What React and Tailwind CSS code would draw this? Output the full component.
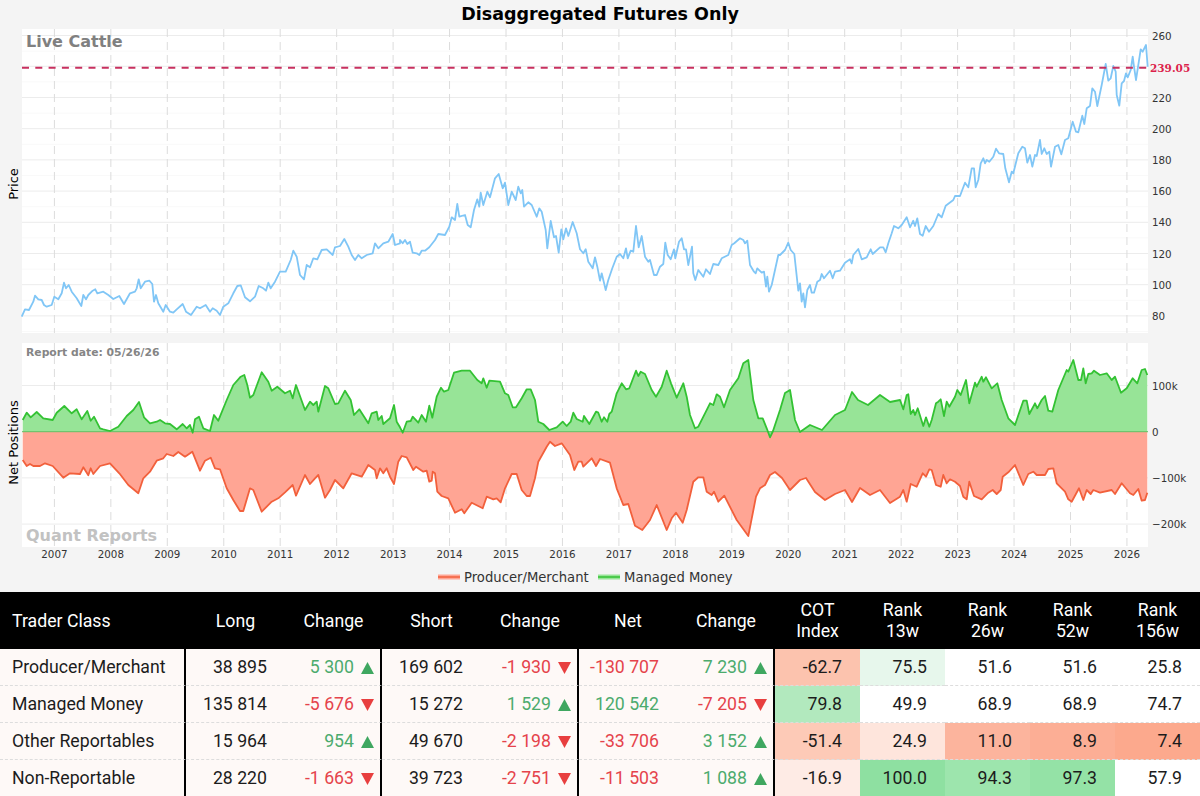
// Points below were read off 3x crops, so each trace carries its crop origin.
const trace = (pts, ox, oy) => pts.map(([x, y]) => [+(ox + x / 3).toFixed(1), +(oy + y / 3).toFixed(1)]);
const toPath = (pts) => pts.map((p) => p.join(',')).join(' ');

const PRICE = [
  ...trace([[5,470],[15,448],[27,450],[40,425],[45,407],[55,418],[65,420],[72,435],[80,440],[95,435],[103,410],[115,418],[125,400],[132,368],[138,385],[146,375],[155,395],[170,415],[184,438],[190,405],[198,418],[205,405],[218,392],[226,388],[232,400],[250,395],[265,405],[280,417],[298,408],[312,432],[330,400],[345,395],[350,385],[356,358],[362,385],[375,365],[388,362],[397,372],[402,425],[408,405],[415,430],[430,455],[437,435],[450,455],[460,458],[470,448],[488,432],[498,455],[513,465],[530,440],[540,445],[557,435],[570,455],[578,445],[590,452],[600,465],[610,440],[625,430],[640,400],[652,378],[662,376],[675,412],[690,424],[705,410],[716,378],[730,385],[738,392],[745,368],[752,385],[765,365],[780,335],[797,335],[812,300],[820,272],[830,290],[840,345],[852,358],[860,315],[870,322],[880,295],[892,298],[905,270],[920,268],[938,285],[945,262],[960,258],[973,237],[985,260],[995,285],[1005,300],[1015,285],[1025,295],[1040,285],[1058,280],[1065,250],[1075,265],[1090,250],[1105,245],[1118,222],[1125,255],[1140,250]], 20, 160),
  ...trace([[0,240],[8,250],[15,240],[22,252],[30,245],[38,278],[50,280],[58,285],[65,272],[75,272],[88,262],[105,240],[115,222],[135,225],[148,200],[155,172],[165,180],[172,132],[178,170],[195,165],[203,195],[212,202],[222,150],[232,118],[238,140],[242,98],[250,135],[262,95],[270,112],[285,55],[296,42],[308,85],[315,68],[325,135],[335,95],[347,120],[355,80],[362,100],[367,90],[372,140],[385,127],[395,135],[410,170],[418,145],[425,155],[437,210],[442,265],[452,183],[462,232],[468,228],[476,278],[484,208],[490,238],[498,205],[505,228],[518,186],[530,220],[540,268],[550,280],[557,268],[565,305],[578,325],[585,292],[592,320],[600,362],[605,340],[617,390],[625,360],[637,325],[650,290],[660,282],[670,295],[678,265],[683,295],[692,272],[700,275],[708,198],[716,262],[725,228],[735,290],[745,305],[750,300],[762,345],[770,345],[780,320],[790,312],[796,248],[803,285],[812,298],[822,268],[826,295],[837,245],[845,235],[852,268],[858,268],[865,315],[876,260],[880,340],[886,360],[895,330],[910,350],[918,328],[930,342],[940,312],[955,315],[965,295],[985,285],[995,255],[1003,250],[1020,235],[1030,240],[1035,250],[1042,242],[1050,315],[1062,335],[1067,340],[1072,325],[1085,338],[1092,335],[1098,380],[1102,350],[1107,395],[1115,375],[1125,330],[1135,285]], 400, 160),
  ...trace([[30,345],[45,330],[55,308],[62,330],[73,342],[85,452],[90,430],[95,485],[100,460],[105,502],[112,450],[120,435],[125,458],[132,458],[142,425],[150,420],[155,402],[162,415],[180,392],[188,415],[195,395],[210,392],[225,368],[240,358],[245,370],[250,345],[265,327],[275,358],[290,352],[302,328],[308,342],[330,322],[340,322],[347,337],[355,310],[365,280],[372,258],[385,265],[395,255],[410,232],[420,262],[430,242],[435,258],[442,235],[450,282],[458,287],[467,258],[477,275],[490,258],[505,222],[515,232],[527,197],[550,180],[555,168],[570,168],[585,128],[595,142],[605,85],[612,85],[617,142],[625,120],[632,70],[640,55],[645,70],[650,60],[658,65],[670,50],[678,26],[687,40],[700,42],[706,85],[717,127],[725,95],[730,100],[745,40],[757,20],[765,25],[772,68],[780,45],[787,80],[795,45],[800,48]], 770, 140),
  ...trace([[420,420],[425,462],[433,445],[440,462],[448,455],[453,500],[465,440],[475,435],[484,463],[495,420],[505,415],[518,365],[528,395],[535,397],[547,347],[553,372],[560,325],[570,318],[577,265],[585,275],[592,318],[605,255],[617,192],[625,242],[632,235],[640,198],[647,215],[650,285],[658,317],[665,250],[672,243],[678,220],[683,232],[692,210],[698,170],[702,200],[708,240],[722,148],[728,155],[738,135],[743,200]], 900, 0),
];

const MANAGED = [
  ...trace([[68,270],[80,248],[92,262],[110,246],[130,265],[158,270],[170,248],[193,228],[215,250],[230,238],[245,268],[262,243],[272,272],[282,260],[300,295],[310,298],[330,303],[355,290],[380,258],[400,240],[417,216],[432,262],[450,280],[470,275],[480,270],[495,280],[510,282],[530,298],[548,282],[560,295],[570,285],[578,308],[585,268],[597,260],[610,295],[630,303],[642,255],[655,272],[680,210],[700,165],[722,140],[733,135],[742,165],[750,203],[760,195],[785,127],[805,155],[815,182],[832,170],[855,190],[870,182],[878,205],[888,165],[915,240],[930,215],[940,225],[950,215],[955,245],[975,168],[985,175],[1005,222],[1015,220],[1035,182],[1052,210],[1062,255],[1078,238],[1105,280],[1115,250],[1130,245],[1135,270],[1145,258],[1150,282]], 0, 330),
  ...trace([[0,205],[12,165],[20,215],[30,232],[38,248],[50,215],[62,213],[68,200],[85,218],[95,195],[108,215],[118,167],[127,203],[140,140],[153,113],[162,125],[175,120],[192,68],[215,62],[240,62],[262,90],[275,100],[280,85],[290,113],[298,92],[330,95],[345,130],[355,135],[368,172],[378,172],[395,145],[410,118],[422,118],[435,150],[445,215],[460,222],[478,240],[500,232],[518,215],[530,228],[542,215],[550,188],[560,207],[578,215],[582,198],[598,222],[618,185],[625,188],[635,215],[642,202],[652,215],[658,192],[665,185],[680,130],[695,100],[708,118],[718,115],[738,62],[745,78],[752,65],[765,72],[785,120],[798,140],[815,110],[830,62],[843,100],[860,143],[880,100],[890,140],[900,195],[915,235],[925,230],[945,190],[960,160],[970,165],[980,133],[990,140],[1002,172],[1020,120],[1045,85],[1060,40],[1075,30],[1090,150],[1105,205],[1118,205],[1130,235],[1140,262]], 390, 350),
  [773,431],[780,410],[785,393],[790,390],[795,420],[800,432],[810,425],[822,430],[835,415],[845,410],[852,392],[858,400],[868,405],[880,395],[890,402],
  ...trace([[0,180],[10,208],[20,165],[25,163],[32,222],[40,210],[45,225],[53,205],[70,258],[78,232],[88,260],[95,240],[108,190],[115,185],[122,178],[132,228],[140,185],[148,200],[165,170],[172,150],[182,165],[198,120],[208,190],[225,128],[230,140],[245,110],[250,125],[258,112],[275,145],[292,130],[305,180],[325,235],[345,255],[370,182],[380,182],[388,222],[405,190],[412,205],[425,180],[435,168],[445,212],[457,215],[475,150],[500,90],[505,95],[520,60],[535,120],[543,120],[550,85],[557,130],[565,102],[575,100],[582,92],[600,105],[620,100],[635,120],[645,110],[663,158],[680,145],[698,115],[712,130],[725,90],[735,87],[742,105]], 900, 340),
];

const PRODUCER = [
  ...trace([[68,390],[80,408],[90,402],[100,408],[120,408],[135,400],[158,408],[190,443],[210,430],[240,432],[250,412],[265,436],[272,415],[280,432],[300,408],[330,400],[358,430],[385,465],[415,490],[430,445],[450,425],[470,392],[490,385],[500,372],[520,378],[535,366],[555,380],[577,365],[600,422],[615,392],[632,383],[645,415],[660,418],[680,475],[700,510],[720,543],[730,543],[750,475],[760,480],[785,545],[815,515],[835,505],[855,487],[878,465],[888,497],[915,435],[930,462],[945,445],[955,435],[975,503],[990,480],[1005,450],[1030,475],[1055,430],[1085,440],[1105,405],[1125,420],[1130,445],[1140,415],[1150,430],[1160,415]], 0, 330),
  ...trace([[0,380],[12,402],[25,335],[35,318],[50,322],[70,360],[78,350],[100,365],[110,362],[118,395],[125,392],[128,365],[135,370],[142,425],[155,438],[175,445],[195,488],[215,478],[223,490],[245,458],[278,475],[290,440],[310,448],[320,445],[332,457],[345,415],[365,372],[380,372],[395,420],[410,438],[420,438],[435,385],[445,335],[470,290],[480,275],[495,288],[515,280],[540,315],[553,360],[565,335],[575,335],[580,350],[605,325],[618,348],[630,327],[660,338],[680,415],[700,465],[715,462],[735,527],[757,540],[780,510],[800,465],[830,540],[845,505],[858,488],[878,518],[890,480],[910,395],[925,382],[940,382],[950,425],[965,435],[972,425],[985,455],[1003,437],[1040,510],[1075,558],[1098,440],[1110,415],[1125,405],[1140,375]], 390, 350),
  [775,472],[782,478],[790,490],[800,480],[806,478],[815,492],[825,500],[835,494],[845,490],[852,502],[860,488],[870,495],[880,490],[890,503],
  ...trace([[0,470],[10,450],[20,485],[32,432],[50,440],[68,400],[78,410],[88,388],[95,390],[108,435],[122,440],[130,405],[140,430],[150,418],[165,425],[180,438],[190,470],[200,478],[208,425],[222,468],[245,478],[265,458],[278,450],[290,462],[302,450],[308,410],[325,397],[345,375],[370,435],[385,402],[400,395],[410,405],[435,405],[445,387],[460,385],[470,430],[495,455],[505,478],[515,485],[537,445],[550,480],[560,450],[572,462],[580,450],[600,458],[635,450],[645,462],[665,430],[690,460],[700,465],[715,447],[725,482],[735,480],[742,458]], 900, 340),
];

const ZERO_Y = 431.7;
const PLOT_LEFT = 22;
const PLOT_RIGHT = 1148;
const closeArea = (pts) => [[pts[0][0], ZERO_Y], ...pts, [pts[pts.length - 1][0], ZERO_Y]];

const YEARS = Array.from({ length: 20 }, (_, i) => ({ label: 2007 + i, x: 54.4 + i * 56.45 }));
const PRICE_TICKS = [[260, 35.5], [220, 97.5], [200, 128.7], [180, 159.9], [160, 191.1], [140, 222.3], [120, 253.5], [100, 284.7], [80, 315.9]];
const NET_TICKS = [['100k', 385.5], ['0', ZERO_Y], ['−100k', 477.9], ['−200k', 524.1]];

const ROWS = [
  { name: 'Producer/Merchant', long: '38 895', longCh: '5 300', short: '169 602', shortCh: '-1 930', net: '-130 707', netCh: '7 230',
    heat: [['-62.7', 'bg-[#fcc3ae]'], ['75.5', 'bg-[#e7f7ec]'], ['51.6', 'bg-white'], ['51.6', 'bg-white'], ['25.8', 'bg-white']] },
  { name: 'Managed Money', long: '135 814', longCh: '-5 676', short: '15 272', shortCh: '1 529', net: '120 542', netCh: '-7 205',
    heat: [['79.8', 'bg-[#b2e9be]'], ['49.9', 'bg-white'], ['68.9', 'bg-white'], ['68.9', 'bg-white'], ['74.7', 'bg-white']] },
  { name: 'Other Reportables', long: '15 964', longCh: '954', short: '49 670', shortCh: '-2 198', net: '-33 706', netCh: '3 152',
    heat: [['-51.4', 'bg-[#fdcab7]'], ['24.9', 'bg-[#fee5dc]'], ['11.0', 'bg-[#fcb49d]'], ['8.9', 'bg-[#fcae95]'], ['7.4', 'bg-[#fca98d]']] },
  { name: 'Non-Reportable', long: '28 220', longCh: '-1 663', short: '39 723', shortCh: '-2 751', net: '-11 503', netCh: '1 088',
    heat: [['-16.9', 'bg-[#feebe5]'], ['100.0', 'bg-[#8ee0a1]'], ['94.3', 'bg-[#9de5ad]'], ['97.3', 'bg-[#94e2a6]'], ['57.9', 'bg-white']] },
];

const signColor = (value) => (value.startsWith('-') ? 'text-[#e5434b]' : 'text-[#4cab6d]');

function Chart() {
  return (
    <svg width="1200" height="563" viewBox="0 29 1200 563" className="block shrink-0 font-['DejaVu_Sans',sans-serif]">
      <rect x={PLOT_LEFT} y="29" width={PLOT_RIGHT - PLOT_LEFT} height="304" fill="#fff" />
      <rect x={PLOT_LEFT} y="343" width={PLOT_RIGHT - PLOT_LEFT} height="204" fill="#fff" />

      {[...PRICE_TICKS, ['', 66.3]].map(([label, y]) => (
        <g key={y}>
          <line x1={PLOT_LEFT} x2={PLOT_RIGHT} y1={y} y2={y} stroke="#ececec" />
          <line x1={PLOT_LEFT} x2={PLOT_RIGHT} y1={y + 15.6} y2={y + 15.6} stroke="#f9f9f9" />
        </g>
      ))}
      {NET_TICKS.map(([label, y]) => (
        <line key={label} x1={PLOT_LEFT} x2={PLOT_RIGHT} y1={y} y2={y} stroke="#ececec" />
      ))}
      {YEARS.map(({ label, x }) => (
        <g key={label} stroke="#dcdcdc" strokeDasharray="8 5">
          <line x1={x} x2={x} y1="29" y2="333" />
          <line x1={x} x2={x} y1="343" y2="547" />
        </g>
      ))}

      <polyline points={toPath(PRICE)} fill="none" stroke="#80c6f6" strokeWidth="1.8" strokeLinejoin="round" />
      <line x1={PLOT_LEFT} x2={PLOT_RIGHT} y1="67.8" y2="67.8" stroke="#c8305f" strokeWidth="2" strokeDasharray="7 6.3" />

      <polygon points={toPath(closeArea(PRODUCER))} fill="#ffa594" />
      <polygon points={toPath(closeArea(MANAGED))} fill="#97e497" />
      <line x1={PLOT_LEFT} x2={PLOT_RIGHT} y1={ZERO_Y} y2={ZERO_Y} stroke="#62bd62" />
      <polyline points={toPath(PRODUCER)} fill="none" stroke="#f2603c" strokeWidth="1.8" strokeLinejoin="round" />
      <polyline points={toPath(MANAGED)} fill="none" stroke="#33c233" strokeWidth="1.8" strokeLinejoin="round" />

      <text x="26" y="46.5" fontSize="16" fontWeight="700" fill="#808080">Live Cattle</text>
      <text x="26" y="355.5" fontSize="10.8" fontWeight="700" fill="#858585">Report date: 05/26/26</text>
      <text x="26" y="540.5" fontSize="16" fontWeight="700" fill="#c2c2c2">Quant Reports</text>

      <g fontSize="10.3" fill="#333">
        {PRICE_TICKS.map(([label, y]) => (
          <text key={label} x="1152" y={y + 4}>{label}</text>
        ))}
        {NET_TICKS.map(([label, y]) => (
          <text key={label} x="1152" y={y + 4}>{label}</text>
        ))}
        {YEARS.map(({ label, x }) => (
          <text key={label} x={x} y="558" textAnchor="middle">{label}</text>
        ))}
      </g>
      <text x="1150" y="72" fontSize="10.5" fontWeight="700" fill="#dc1f4c" className="font-['DejaVu_Serif',serif]">239.05</text>

      <g fontSize="13" fill="#000">
        <text transform="translate(18 184) rotate(-90)" textAnchor="middle">Price</text>
        <text transform="translate(18 442.5) rotate(-90)" textAnchor="middle">Net Positions</text>
      </g>

      <rect x="438" y="574.5" width="22" height="5" fill="#ffa594" />
      <line x1="438" x2="460" y1="577" y2="577" stroke="#f2603c" strokeWidth="1.5" />
      <text x="464" y="581.5" fontSize="13.2" fill="#333">Producer/Merchant</text>
      <rect x="598" y="574.5" width="22" height="5" fill="#97e497" />
      <line x1="598" x2="620" y1="577" y2="577" stroke="#33c233" strokeWidth="1.5" />
      <text x="624" y="581.5" fontSize="13.2" fill="#333">Managed Money</text>
    </svg>
  );
}

function ChangeCell({ value }) {
  const down = value.startsWith('-');
  return (
    <td className={`border-r-2 border-r-black pr-[6px] text-right ${signColor(value)}`}>
      {value}
      <svg width="13" height="12" viewBox="0 0 13 12" className={`ml-[7px] inline-block align-[-1px] ${down ? 'fill-[#e83f3f]' : 'fill-[#3fa760]'}`}>
        <polygon points={down ? '0,0 13,0 6.5,12' : '6.5,0 13,12 0,12'} />
      </svg>
    </td>
  );
}

function CotTable() {
  const head = ['Long', 'Change', 'Short', 'Change', 'Net', 'Change'];
  return (
    <table className="w-[1200px] shrink-0 table-fixed border-separate border-spacing-0 font-['Roboto',sans-serif] text-[17.7px] leading-[21px] text-[#1c1c1c]">
      <colgroup>
        <col className="w-[186px]" />
        <col className="w-[99px]" />
        <col className="w-[97px]" />
        <col className="w-[99px]" />
        <col className="w-[98px]" />
        <col className="w-[98px]" />
        <col className="w-[98px]" />
        <col className="w-[85px]" />
        <col className="w-[85px]" />
        <col className="w-[85px]" />
        <col className="w-[85px]" />
        <col className="w-[85px]" />
      </colgroup>
      <thead>
        <tr className="h-[57px] bg-black text-white [&>th]:pt-px">
          <th className="pl-3 text-left font-normal">Trader Class</th>
          {head.map((label, i) => (
            <th key={i} className="font-normal">{label}</th>
          ))}
          <th className="font-normal">COT<br />Index</th>
          <th className="font-normal">Rank<br />13w</th>
          <th className="font-normal">Rank<br />26w</th>
          <th className="font-normal">Rank<br />52w</th>
          <th className="font-normal">Rank<br />156w</th>
        </tr>
      </thead>
      <tbody>
        {ROWS.map((row) => (
          <tr key={row.name} className="h-[37px] bg-[#fef9f7] [&>td]:pt-px [&>td]:[border-bottom:1px_dashed_#dddddd]">
            <td className="border-r-2 border-r-black pl-3">{row.name}</td>
            <td className="pr-[18px] text-right">{row.long}</td>
            <ChangeCell value={row.longCh} />
            <td className="pr-[18px] text-right">{row.short}</td>
            <ChangeCell value={row.shortCh} />
            <td className={`pr-[18px] text-right ${signColor(row.net)}`}>{row.net}</td>
            <ChangeCell value={row.netCh} />
            {row.heat.map(([value, bg], i) => (
              <td key={i} className={`pr-[18px] text-right ${bg}`}>{value}</td>
            ))}
          </tr>
        ))}
      </tbody>
    </table>
  );
}

export default function App() {
  return (
    <div className="flex h-[796px] w-[1200px] flex-col overflow-hidden bg-[#f4f4f4]">
      <h1 className="flex h-[29px] shrink-0 items-center justify-center font-['DejaVu_Sans',sans-serif] text-[17.5px] font-bold text-black">
        Disaggregated Futures Only
      </h1>
      <Chart />
      <CotTable />
    </div>
  );
}
